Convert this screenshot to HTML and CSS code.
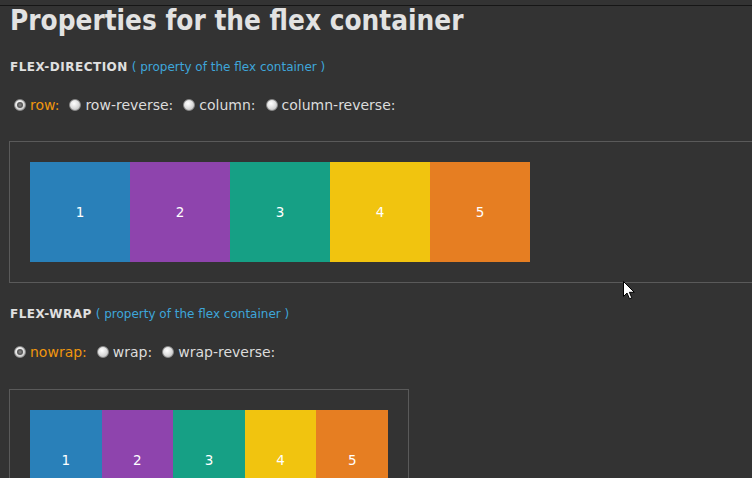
FILE: index.html
```html
<!DOCTYPE html>
<html lang="en">
<head>
<meta charset="utf-8">
<title>Properties for the flex container</title>
<link rel="stylesheet" href="styles.css">
</head>
<body>
<div class="topbar"></div>
<h1 class="page-title">Properties for the flex container</h1>

<section class="prop prop-first">
  <h2 class="prop-title"><span class="prop-name">FLEX-DIRECTION</span> <span class="prop-note">( property of the flex container )</span></h2>
  <div class="options">
    <label class="opt opt-checked"><span class="radio"></span><span>row:</span></label>
    <label class="opt"><span class="radio"></span><span>row-reverse:</span></label>
    <label class="opt"><span class="radio"></span><span>column:</span></label>
    <label class="opt"><span class="radio"></span><span>column-reverse:</span></label>
  </div>
  <div class="box box-wide">
    <div class="item c1">1</div>
    <div class="item c2">2</div>
    <div class="item c3">3</div>
    <div class="item c4">4</div>
    <div class="item c5">5</div>
  </div>
</section>

<section class="prop prop-second">
  <h2 class="prop-title"><span class="prop-name">FLEX-WRAP</span> <span class="prop-note">( property of the flex container )</span></h2>
  <div class="options">
    <label class="opt opt-checked"><span class="radio"></span><span>nowrap:</span></label>
    <label class="opt"><span class="radio"></span><span>wrap:</span></label>
    <label class="opt"><span class="radio"></span><span>wrap-reverse:</span></label>
  </div>
  <div class="box box-narrow">
    <div class="item c1">1</div>
    <div class="item c2">2</div>
    <div class="item c3">3</div>
    <div class="item c4">4</div>
    <div class="item c5">5</div>
  </div>
</section>

<svg class="cursor" width="12" height="19" viewBox="0 0 12 19" aria-hidden="true">
  <path d="M0.5 0.5 L0.5 15.5 L4 12 L6.5 17.8 L8.8 16.8 L6.4 11.3 L11.3 11.3 Z" fill="#fff" stroke="#000" stroke-width="1" stroke-linejoin="miter"/>
</svg>
</body>
</html>
```

FILE: styles.css
```css
html, body {
  margin: 0;
  padding: 0;
  overflow: hidden;
}
body {
  background: #333333;
  color: #dddddd;
  font-family: "DejaVu Sans", Verdana, sans-serif;
  height: 478px;
  position: relative;
}
.topbar {
  height: 5px;
  border-bottom: 1px solid #161616;
}
.page-title {
  margin: 0;
  padding: 1px 0 0 10px;
  font-family: "DejaVu Sans Condensed", "DejaVu Sans", sans-serif;
  font-stretch: condensed;
  font-weight: bold;
  font-size: 27.7px;
  line-height: 28px;
  color: #e2e2e2;
  white-space: nowrap;
}
.prop-first {
  margin-top: 22px;
}
.prop-second {
  margin-top: 21px;
}
.prop-title {
  margin: 0;
  padding-left: 10px;
  height: 20px;
  font-size: 12px;
  line-height: 20px;
  font-weight: normal;
  white-space: nowrap;
}
.prop-name {
  font-family: "DejaVu Sans", sans-serif;
  font-weight: bold;
  font-size: 12px;
  letter-spacing: 0.5px;
  color: #e0e0e0;
}
.prop-note {
  font-family: "DejaVu Sans", sans-serif;
  font-size: 12px;
  color: #3ea6da;
}
.options {
  margin-top: 18px;
  height: 20px;
  display: flex;
  align-items: center;
  padding-left: 14px;
  font-size: 14px;
  color: #dcdcdc;
}
.opt {
  display: inline-flex;
  align-items: center;
  gap: 4px;
  margin-right: 10px;
  white-space: nowrap;
}
.opt-checked {
  color: #f0960e;
}
.radio {
  width: 12px;
  height: 12px;
  box-sizing: border-box;
  border-radius: 50%;
  border: 1px solid #8a8a8a;
  background: radial-gradient(circle at 40% 35%, #ffffff 0%, #e2e2e2 45%, #b4b4b4 100%);
  position: relative;
  flex: none;
}
.opt-checked .radio::after {
  content: "";
  position: absolute;
  left: 2px;
  top: 2px;
  width: 6px;
  height: 6px;
  border-radius: 50%;
  background: radial-gradient(circle at 50% 50%, #8c8c8c 0%, #5a5a5a 50%, #4a4a4a 100%);
}
.box {
  margin-top: 26px;
  margin-left: 9px;
  border: 1px solid #5a5a5a;
  padding: 20px;
  display: flex;
}
.box-wide {
  margin-right: -40px;
}
.prop-second .box {
  margin-top: 27px;
}
.box-narrow {
  width: 400px;
  box-sizing: border-box;
  flex-wrap: nowrap;
}
.item {
  flex: 0 1 100px;
  height: 100px;
  display: flex;
  align-items: center;
  justify-content: center;
  color: #ffffff;
  font-family: "DejaVu Sans", sans-serif;
  font-size: 13.5px;
}
.c1 { background: #2980b9; }
.c2 { background: #8e44ad; }
.c3 { background: #16a085; }
.c4 { background: #f1c40f; }
.c5 { background: #e67e22; }
.cursor {
  position: absolute;
  left: 623px;
  top: 281px;
}
```
